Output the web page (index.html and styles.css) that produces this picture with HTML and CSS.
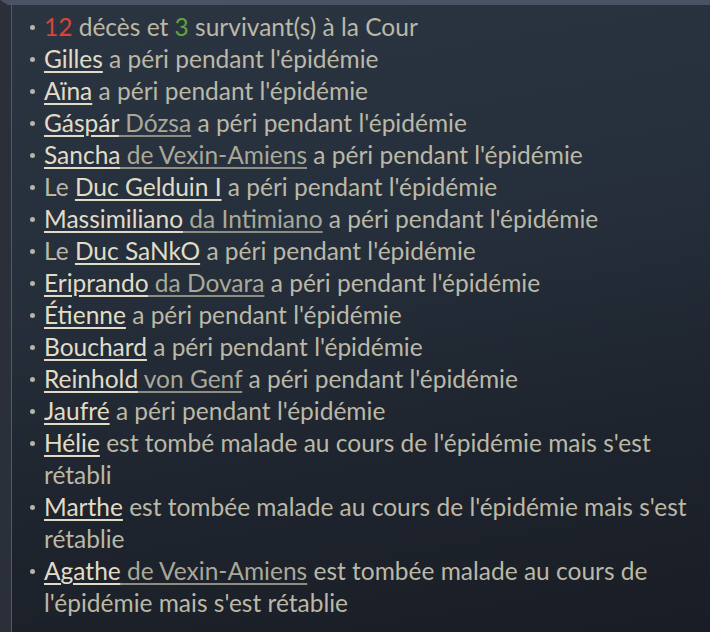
FILE: index.html
```html
<!DOCTYPE html>
<html lang="fr">
<head>
    <meta charset="UTF-8">
    <title>Épidémie</title>
    <link rel="stylesheet" href="styles.css">
</head>
<body>
    <div class="tooltip">
        <ul class="report">
            <li><span class="bad">12</span> décès et <span class="good">3</span> survivant(s) à la Cour</li>
            <li><span class="name">Gilles</span> a péri pendant l'épidémie</li>
            <li><span class="name">Aïna</span> a péri pendant l'épidémie</li>
            <li><span class="name">Gáspár</span><span class="house"> Dózsa</span> a péri pendant l'épidémie</li>
            <li><span class="name">Sancha</span><span class="house"> de Vexin-Amiens</span> a péri pendant l'épidémie</li>
            <li>Le <span class="name">Duc Gelduin I</span> a péri pendant l'épidémie</li>
            <li><span class="name">Massimiliano</span><span class="house"> da Intimiano</span> a péri pendant l'épidémie</li>
            <li>Le <span class="name">Duc SaNkO</span> a péri pendant l'épidémie</li>
            <li><span class="name">Eriprando</span><span class="house"> da Dovara</span> a péri pendant l'épidémie</li>
            <li><span class="name">Étienne</span> a péri pendant l'épidémie</li>
            <li><span class="name">Bouchard</span> a péri pendant l'épidémie</li>
            <li><span class="name">Reinhold</span><span class="house"> von Genf</span> a péri pendant l'épidémie</li>
            <li><span class="name">Jaufré</span> a péri pendant l'épidémie</li>
            <li><span class="name">Hélie</span> est tombé malade au cours de l'épidémie mais s'est rétabli</li>
            <li><span class="name">Marthe</span> est tombée malade au cours de l'épidémie mais s'est rétablie</li>
            <li><span class="name">Agathe</span><span class="house"> de Vexin-Amiens</span> est tombée malade au cours de l'épidémie mais s'est rétablie</li>
        </ul>
    </div>
</body>
</html>
```
FILE: styles.css
```css
body {
    margin: 0;
    padding: 0;
    background-color: #1b2029;
}

.tooltip {
    width: 710px;
    height: 632px;
    box-sizing: border-box;
    border-top: 5px solid #4b5264;
    border-left: 8px solid #2a2f3a;
    background: linear-gradient(170deg, #2b3542 0%, #26303c 35%, #1e242e 70%, #191d25 100%);
    box-shadow: inset 3px 0 0 #2a2f3a, inset 4px 0 0 #545a68;
    padding: 6px 20px 0 18px;
    overflow: hidden;
    font-family: Lato, "Open Sans", sans-serif;
    font-size: 24.5px;
    line-height: 32px;
    color: #bcb8a6;
}

.report {
    list-style: none;
    margin: 0;
    padding: 0;
    width: 662px;
}

.report li {
    position: relative;
    padding-left: 18px;
}

.report li::before {
    content: "";
    position: absolute;
    left: 4px;
    top: 14px;
    width: 5px;
    height: 5px;
    border-radius: 50%;
    background: #b8b4a2;
}

.name {
    color: #e2dcc6;
    text-decoration: underline;
    text-decoration-thickness: 2px;
    text-underline-offset: 3px;
}

.house {
    color: #aaa898;
    text-decoration: underline;
    text-decoration-color: #8e8d82;
    text-decoration-thickness: 2px;
    text-underline-offset: 3px;
}

.bad {
    color: #d8433a;
}

.good {
    color: #5fa33c;
}
```
